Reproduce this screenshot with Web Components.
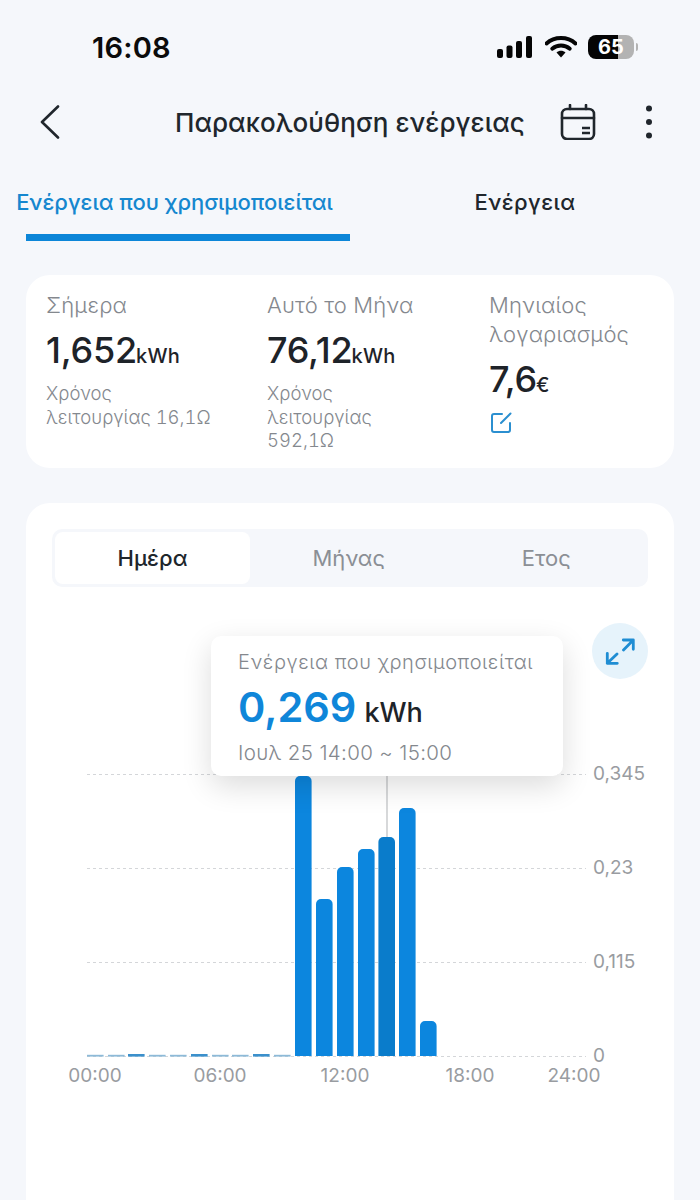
<!DOCTYPE html>
<html lang="el">
<head>
<meta charset="utf-8">
<title>Παρακολούθηση ενέργειας</title>
<style>
  html, body { margin: 0; height: 1200px; overflow: hidden; background: #f5f7fb; }
  body { font-family: Inter, "Noto Sans", sans-serif; color: #1e2329; display: flex; flex-direction: column; }
</style>
</head>
<body>
<status-bar></status-bar>
<app-header>Παρακολούθηση ενέργειας</app-header>
<energy-tabs></energy-tabs>
<stat-card>
  <stat-item label="Σήμερα" value="1,652" unit="kWh">Χρόνος<br>λειτουργίας 16,1Ω</stat-item>
  <stat-item label="Αυτό το Μήνα" value="76,12" unit="kWh">Χρόνος<br>λειτουργίας<br>592,1Ω</stat-item>
  <stat-item label="Μηνιαίος<br>λογαριασμός" value="7,6" unit="€" editable></stat-item>
</stat-card>
<chart-card>
  <segment-control></segment-control>
  <energy-chart></energy-chart>
</chart-card>

<script>
class StatusBar extends HTMLElement {
  constructor() {
    super();
    this.attachShadow({ mode: 'open' });
  }
  connectedCallback() {
    this.shadowRoot.innerHTML = `
      <style>
        :host { display: flex; align-items: center; height: 94px; padding: 0 62px 0 92px; box-sizing: border-box; }
        .time { font-size: 29px; font-weight: 600; color: #0b0b0c; flex: 1; letter-spacing: .2px; }
        .icons { display: flex; align-items: center; }
        .signal { margin-right: 13px; }
        .wifi { margin-right: 11px; }
        svg { display: block; }
        .battery { position: relative; width: 46px; height: 24px; border-radius: 8px; overflow: hidden; background: linear-gradient(90deg, #050505 65%, #b3b3b3 65%); }
        .battery span { display: block; text-align: center; font-size: 20px; line-height: 24px; font-weight: 700; color: #fff; }
        .wrap { display: flex; align-items: center; gap: 2px; }
        .nub { width: 2px; height: 8px; border-radius: 0 2px 2px 0; background: #b3b3b3; }
      </style>
      <div class="time">16:08</div>
      <div class="icons">
        <svg class="signal" width="35" height="22" viewBox="0 0 35 22" fill="#050505">
          <rect x="0" y="13" width="6" height="9" rx="2"/>
          <rect x="9.5" y="9.5" width="6" height="12.5" rx="2"/>
          <rect x="19" y="5" width="6" height="17" rx="2"/>
          <rect x="29" y="0" width="6" height="22" rx="2"/>
        </svg>
        <svg class="wifi" width="32" height="22" viewBox="0 0 32 22">
          <path d="M1.5 7.5C9.5 .2 22.5 .2 30.5 7.5" fill="none" stroke="#050505" stroke-width="4" stroke-linecap="round"/>
          <path d="M7.2 12.8C12.2 8.4 19.8 8.4 24.8 12.8" fill="none" stroke="#050505" stroke-width="3.8" stroke-linecap="round"/>
          <path d="M11.5 16.6C14 14.2 18 14.2 20.5 16.6L16 21.6Z" fill="#050505"/>
        </svg>
        <div class="wrap">
          <div class="battery"><span>65</span></div>
          <div class="nub"></div>
        </div>
      </div>
    `;
  }
}

class AppHeader extends HTMLElement {
  constructor() {
    super();
    this.attachShadow({ mode: 'open' });
  }
  connectedCallback() {
    this.shadowRoot.innerHTML = `
      <style>
        :host { display: flex; align-items: center; height: 56px; padding: 0 48px 0 40px; }
        .title { font-size: 26px; font-weight: 500; color: #20262c; margin-left: 115px; white-space: nowrap; letter-spacing: .05px; }
        .right { margin-left: auto; display: flex; align-items: center; gap: 50px; }
        svg { display: block; }
      </style>
      <svg width="20" height="34" viewBox="0 0 20 34" fill="none" stroke="#20262c" stroke-width="2.6" stroke-linecap="round" stroke-linejoin="round"><path d="M18 1.5 2 17l16 15.5"/></svg>
      <div class="title"><slot></slot></div>
      <div class="right">
        <svg width="36" height="36" viewBox="0 0 36 36" fill="none" stroke="#20262c" stroke-width="2.6" stroke-linecap="round" stroke-linejoin="round">
          <rect x="2" y="5" width="32" height="30" rx="5"/>
          <path d="M2 14h32M10 1v4M26 1v4"/>
          <path d="M22 24h8M22 29h8" stroke-width="2.4" stroke-linecap="butt"/>
        </svg>
        <svg width="6" height="34" viewBox="0 0 6 34" fill="#20262c"><circle cx="3" cy="3.5" r="3"/><circle cx="3" cy="17" r="3"/><circle cx="3" cy="30.5" r="3"/></svg>
      </div>
    `;
  }
}

class EnergyTabs extends HTMLElement {
  constructor() {
    super();
    this.attachShadow({ mode: 'open' });
  }
  connectedCallback() {
    this.shadowRoot.innerHTML = `
      <style>
        :host { display: flex; height: 91px; padding: 0 26px; }
        .tab { position: relative; display: flex; justify-content: center; padding-top: 39px; box-sizing: border-box; font-size: 22px; line-height: 27px; font-weight: 500; white-space: nowrap; }
        .on { width: 324px; color: #1587cf; letter-spacing: -.05px; }
        .on span { margin-left: -27px; }
        .on::after { content: ""; position: absolute; left: 0; right: 0; bottom: 0; height: 7px; background: #0c86d8; }
        .off { flex: 1; color: #20262c; padding-left: 26px; letter-spacing: .4px; }
      </style>
      <div class="tab on"><span>Ενέργεια που χρησιμοποιείται</span></div>
      <div class="tab off">Ενέργεια</div>
    `;
  }
}

class StatCard extends HTMLElement {
  constructor() {
    super();
    this.attachShadow({ mode: 'open' });
  }
  connectedCallback() {
    this.shadowRoot.innerHTML = `
      <style>
        :host { display: grid; grid-template-columns: 221px 222px 1fr; margin: 34px 26px 0; padding: 16px 20px 15px; height: 193px; box-sizing: border-box; background: #fff; border-radius: 24px; }
      </style>
      <slot></slot>
    `;
  }
}

class StatItem extends HTMLElement {
  constructor() {
    super();
    this.attachShadow({ mode: 'open' });
  }
  connectedCallback() {
    const edit = this.hasAttribute('editable') ? `
      <svg class="edit" width="21" height="21" viewBox="0 0 21 21" fill="none" stroke="#2b8fd0" stroke-width="2" stroke-linecap="round" stroke-linejoin="round">
        <path d="M11 2H3a2 2 0 0 0-2 2v14a2 2 0 0 0 2 2h14a2 2 0 0 0 2-2v-7"/>
        <path d="M10 11 19.5 1.5"/>
      </svg>` : '';
    this.shadowRoot.innerHTML = `
      <style>
        :host { display: block; }
        .label { font-size: 22px; line-height: 29px; font-weight: 300; letter-spacing: .15px; color: #84888e; }
        .value { font-size: 36px; line-height: 44px; font-weight: 500; color: #1e2329; margin-top: 8px; white-space: nowrap; letter-spacing: -.2px; }
        .unit { font-size: 20px; letter-spacing: .3px; margin-left: -1px; }
        .sub { font-size: 18.5px; line-height: 23.5px; font-weight: 300; font-variant-numeric: tabular-nums; color: #84888e; margin-top: 4px; }
        .edit { display: block; margin: 5px 0 0 2px; }
      </style>
      <div class="label">${this.getAttribute('label')}</div>
      <div class="value">${this.getAttribute('value')}<span class="unit">${this.getAttribute('unit')}</span></div>
      ${edit}
      <div class="sub"><slot></slot></div>
    `;
  }
}

class ChartCard extends HTMLElement {
  constructor() {
    super();
    this.attachShadow({ mode: 'open' });
  }
  connectedCallback() {
    this.shadowRoot.innerHTML = `
      <style>
        :host { display: block; flex: 1; margin: 35px 26px 0; padding: 26px 26px 0; background: #fff; border-radius: 24px 24px 0 0; }
      </style>
      <slot></slot>
    `;
  }
}

class SegmentControl extends HTMLElement {
  constructor() {
    super();
    this.attachShadow({ mode: 'open' });
  }
  connectedCallback() {
    this.shadowRoot.innerHTML = `
      <style>
        :host { display: grid; grid-template-columns: 195px 1fr 1fr; height: 58px; padding: 3px; box-sizing: border-box; background: #f5f7fb; border-radius: 10px; }
        div { display: flex; align-items: center; justify-content: center; font-size: 22px; font-weight: 400; color: #8b8f95; }
        .on { background: #fff; border-radius: 8px; color: #20262c; font-weight: 500; }
      </style>
      <div class="on">Ημέρα</div>
      <div>Μήνας</div>
      <div>Ετος</div>
    `;
  }
}

class EnergyChart extends HTMLElement {
  constructor() {
    super();
    this.attachShadow({ mode: 'open' });
    // bar tops, page y measured from the baseline at 1056
    this.bars = [
      [87, 1054.8, 0], [108, 1054.8, 0], [128, 1054, 0], [149, 1054.8, 0], [170, 1054.8, 0],
      [191, 1054, 0], [212, 1054.8, 0], [232, 1054.8, 0], [253, 1054, 0], [274, 1054.8, 0],
      [295, 776, 1], [316, 899, 1], [337, 867, 1], [358, 849, 1], [378.4, 837, 2], [399, 808, 1], [420, 1021, 1]
    ];
  }
  connectedCallback() {
    const top = 587, left = 52;
    const base = 1056 - top;
    const grid = [[774, '0,345'], [868, '0,23'], [962, '0,115'], [1056, '0']].map(([y, t]) => `
      <line x1="${87 - left}" x2="${586 - left}" y1="${y - top + .5}" y2="${y - top + .5}" stroke="#d4d6d9" stroke-width="1" stroke-dasharray="3 3"/>
      <text x="${593 - left}" y="${y - top + 6}" class="t">${t}</text>`).join('');
    const bars = this.bars.map(([x, y, k]) => {
      const px = x - left, py = y - top, w = 16.6;
      if (base - py < 3) {
        return `<rect x="${px}" y="${py}" width="${w}" height="${base - py + .6}" fill="${base - py > 1.5 ? '#3b90cc' : '#8dbad8'}"/>`;
      }
      const fill = k === 2 ? '#0a7ccb' : '#0c86de';
      return `<path d="M${px} ${base}V${py + 5}a5 5 0 0 1 5-5h${w - 10}a5 5 0 0 1 5 5V${base}Z" fill="${fill}"/>`;
    }).join('');
    const labels = [[95, '00:00'], [220, '06:00'], [345, '12:00'], [470, '18:00'], [574, '24:00']].map(([x, t]) =>
      `<text x="${x - left}" y="${1082 - top}" text-anchor="middle" class="t">${t}</text>`).join('');
    this.shadowRoot.innerHTML = `
      <style>
        :host { display: block; position: relative; height: 520px; }
        svg.plot { position: absolute; left: 0; top: 0; overflow: visible; }
        .t { font-size: 19px; fill: #999ca1; font-family: Inter, "Noto Sans", sans-serif; }
        .tip { position: absolute; left: 159px; top: 49px; width: 352px; height: 140px; box-sizing: border-box; padding: 13px 27px 0; background: #fff; border-radius: 10px; box-shadow: 0 10px 30px rgba(0,0,0,.14); }
        .tip .a { font-size: 20px; line-height: 26px; font-weight: 300; color: #84888e; letter-spacing: .55px; white-space: nowrap; }
        .tip .v { font-size: 41.5px; line-height: 56px; font-weight: 600; color: #0f86d9; margin-top: 4px; white-space: nowrap; }
        .tip .v span { font-size: 27px; font-weight: 500; color: #1e2329; margin-left: 8px; }
        .tip .d { font-size: 20.5px; line-height: 26px; font-weight: 300; color: #84888e; white-space: nowrap; letter-spacing: .35px; margin-top: -1px; }
        .expand { position: absolute; left: 540px; top: 36px; width: 56px; height: 56px; border-radius: 50%; background: #e6f3fb; display: flex; align-items: center; justify-content: center; }
      </style>
      <svg class="plot" width="596" height="520" viewBox="0 0 596 520">
        ${grid}
        <line x1="${387 - left}" x2="${387 - left}" y1="${776 - top}" y2="${840 - top}" stroke="#bdbfc2" stroke-width="1.2"/>
        ${bars}
        ${labels}
      </svg>
      <div class="tip">
        <div class="a">Ενέργεια που χρησιμοποιείται</div>
        <div class="v">0,269<span>kWh</span></div>
        <div class="d">Ιουλ 25 14:00 ~ 15:00</div>
      </div>
      <div class="expand">
        <svg width="30" height="28" viewBox="0 0 30 28" fill="none" stroke="#1f8dd3" stroke-width="2.8" stroke-linecap="round" stroke-linejoin="round">
          <path d="M18.3 3H28.3V12.3M28.3 3 18.5 13"/>
          <path d="M2.3 16.3V26.3H12.3M2.3 26.3 12 17"/>
        </svg>
      </div>
    `;
  }
}

customElements.define('status-bar', StatusBar);
customElements.define('app-header', AppHeader);
customElements.define('energy-tabs', EnergyTabs);
customElements.define('stat-card', StatCard);
customElements.define('stat-item', StatItem);
customElements.define('chart-card', ChartCard);
customElements.define('segment-control', SegmentControl);
customElements.define('energy-chart', EnergyChart);
</script>
</body>
</html>
